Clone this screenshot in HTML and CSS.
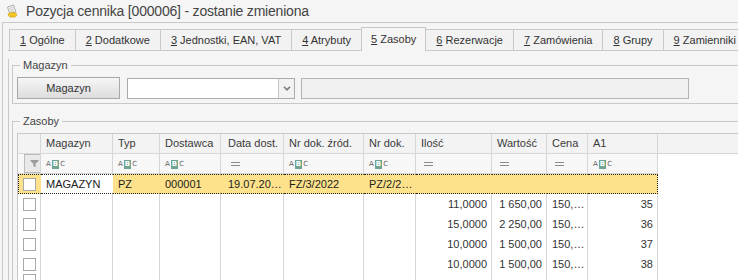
FILE: index.html
```html
<!DOCTYPE html>
<html lang="pl">
  <head>
    <meta charset="UTF-8" />
    <title>Pozycja cennika</title>
    <link rel="stylesheet" href="styles.css">
  </head>
  <body>
    <div class="title">
      <svg class="title-icon" width="14" height="14" viewBox="0 0 14 14">
        <path d="M2.5 3.2l6-2.2 2.4 7-6 2.2z" fill="#f4f4f4" stroke="#999" stroke-width="0.8" />
        <path d="M4.3 4.6l3.6-1.3M4.9 6.3l3.6-1.3M5.5 8l3.6-1.3" stroke="#aaa" stroke-width="0.6" />
        <ellipse cx="7.5" cy="10.8" rx="4.2" ry="2.4" fill="#f3c623" stroke="#c89b12" stroke-width="0.6" />
      </svg>
      Pozycja cennika [000006] - zostanie zmieniona
    </div>

    <div class="frame">
      <div class="tabs">
        <div class="tab"><u>1</u> Ogólne</div>
        <div class="tab"><u>2</u> Dodatkowe</div>
        <div class="tab"><u>3</u> Jednostki, EAN, VAT</div>
        <div class="tab"><u>4</u> Atrybuty</div>
        <div class="tab active"><u>5</u> Zasoby</div>
        <div class="tab"><u>6</u> Rezerwacje</div>
        <div class="tab"><u>7</u> Zamówienia</div>
        <div class="tab"><u>8</u> Grupy</div>
        <div class="tab"><u>9</u> Zamienniki</div>
      </div>

      <div class="panel">
        <fieldset class="group">
          <legend>Magazyn</legend>
          <div class="mag-row">
            <button class="btn" type="button">Magazyn</button>
            <div class="combo">
              <span class="combo-arrow">
                <svg width="8" height="5" viewBox="0 0 8 5">
                  <path d="M1 0.8l3 3 3-3" fill="none" stroke="#7a7a7a" stroke-width="1.6" />
                </svg>
              </span>
            </div>
            <div class="field-off"></div>
          </div>
        </fieldset>

        <fieldset class="group zasoby">
          <legend>Zasoby</legend>
          <div class="grid-wrap">
            <table class="grid">
              <colgroup>
                <col class="w-check">
                <col class="w-mag">
                <col class="w-typ">
                <col class="w-dost">
                <col class="w-date">
                <col class="w-src">
                <col class="w-doc">
                <col class="w-qty">
                <col class="w-val">
                <col class="w-price">
                <col class="w-a1">
                <col>
              </colgroup>
              <tr class="head">
                <th></th>
                <th>Magazyn</th>
                <th>Typ</th>
                <th>Dostawca</th>
                <th class="date">Data dost.</th>
                <th>Nr dok. źród.</th>
                <th>Nr dok.</th>
                <th>Ilość</th>
                <th>Wartość</th>
                <th>Cena</th>
                <th>A1</th>
                <th class="fill"></th>
              </tr>
              <tr class="filter">
                <td class="check">
                  <span class="filter-btn">
                    <svg width="9" height="9" viewBox="0 0 9 9">
                      <path d="M0.5 1h8v1L5.6 4.8V8.3L3.4 7.2V4.8L0.5 2z" fill="#9c9c9c" />
                    </svg>
                  </span>
                </td>
                <td><span class="abc">A<b>B</b>C</span></td>
                <td><span class="abc">A<b>B</b>C</span></td>
                <td><span class="abc">A<b>B</b>C</span></td>
                <td class="date"><span class="eq"></span></td>
                <td><span class="abc">A<b>B</b>C</span></td>
                <td><span class="abc">A<b>B</b>C</span></td>
                <td><span class="eq"></span></td>
                <td><span class="eq"></span></td>
                <td><span class="eq"></span></td>
                <td><span class="abc">A<b>B</b>C</span></td>
                <td class="fill"></td>
              </tr>
              <tr class="sel">
                <td class="check"><span class="cb"></span></td>
                <td class="focus">MAGAZYN</td>
                <td>PZ</td>
                <td>000001</td>
                <td class="date">19.07.2022</td>
                <td>FZ/3/2022</td>
                <td class="doc">PZ/2/2022</td>
                <td></td>
                <td></td>
                <td></td>
                <td></td>
                <td class="fill"></td>
              </tr>
              <tr>
                <td class="check"><span class="cb"></span></td>
                <td></td><td></td><td></td><td></td><td></td><td></td>
                <td class="num">11,0000</td>
                <td class="num">1 650,00</td>
                <td class="price">150,0000</td>
                <td class="num">35</td>
                <td class="fill"></td>
              </tr>
              <tr>
                <td class="check"><span class="cb"></span></td>
                <td></td><td></td><td></td><td></td><td></td><td></td>
                <td class="num">15,0000</td>
                <td class="num">2 250,00</td>
                <td class="price">150,0000</td>
                <td class="num">36</td>
                <td class="fill"></td>
              </tr>
              <tr>
                <td class="check"><span class="cb"></span></td>
                <td></td><td></td><td></td><td></td><td></td><td></td>
                <td class="num">10,0000</td>
                <td class="num">1 500,00</td>
                <td class="price">150,0000</td>
                <td class="num">37</td>
                <td class="fill"></td>
              </tr>
              <tr>
                <td class="check"><span class="cb"></span></td>
                <td></td><td></td><td></td><td></td><td></td><td></td>
                <td class="num">10,0000</td>
                <td class="num">1 500,00</td>
                <td class="price">150,0000</td>
                <td class="num">38</td>
                <td class="fill"></td>
              </tr>
              <tr>
                <td class="check"><span class="cb"></span></td>
                <td></td><td></td><td></td><td></td><td></td><td></td>
                <td></td><td></td><td></td><td></td>
                <td class="fill"></td>
              </tr>
            </table>
          </div>
        </fieldset>
      </div>
    </div>
  </body>
</html>
```

FILE: styles.css
```css
html,
body {
  overflow: hidden;
}

body {
  margin: 0;
  width: 738px;
  height: 280px;
  background: #f5f5f5;
  font-family: "Liberation Sans", Arial, sans-serif;
  font-size: 11px;
  color: #333;
}

.title {
  height: 22px;
  display: flex;
  align-items: center;
  padding-left: 5px;
  font-size: 14px;
  letter-spacing: -0.2px;
  color: #444;
}

.title-icon {
  margin-right: 7px;
}

.frame {
  margin-left: 2px;
  width: 800px;
  height: 300px;
  border-top: 1px solid #c8c8c8;
  border-left: 1px solid #c8c8c8;
}

/* tabs */
.tabs {
  display: flex;
  align-items: flex-end;
  height: 27px;
  margin-left: 5px;
  padding-left: 1px;
  border-bottom: 1px solid #c8c8c8;
}

.tab {
  line-height: 20px;
  padding: 0 10px;
  margin-left: -1px;
  border: 1px solid #c8c8c8;
  border-bottom: none;
  background: #f2f2f2;
  white-space: nowrap;
}

.tab:first-child {
  margin-left: 0;
}

.tab.active {
  padding: 1px 9px 2px;
  margin-bottom: -1px;
  background: #f5f5f5;
}

.panel {
  margin-left: 5px;
  padding-left: 3px;
  height: 260px;
  border-left: 1px solid #c8c8c8;
}

/* group boxes */
.group {
  margin: 8px 0 0;
  min-width: 0;
  padding: 5px 0 4px 4px;
  border: 1px solid #c8c8c8;
}

.group.zasoby {
  margin-top: 11px;
  padding-bottom: 0;
}

.group legend {
  margin-left: 3px;
  padding: 0 3px;
  line-height: 13px;
  color: #444;
}

.mag-row {
  display: flex;
  align-items: flex-end;
}

.btn {
  width: 103px;
  height: 22px;
  margin: 0 7px 0 0;
  padding: 0;
  border: 1px solid #a8a8a8;
  background: linear-gradient(#f6f6f6, #dddddd);
  font: inherit;
  color: #333;
}

.combo {
  display: flex;
  justify-content: flex-end;
  width: 168px;
  height: 21px;
  margin-right: 6px;
  box-sizing: border-box;
  border: 1px solid #ababab;
  background: #fff;
}

.combo-arrow {
  display: flex;
  align-items: center;
  justify-content: center;
  width: 15px;
  border-left: 1px solid #c8c8c8;
  background: #f2f2f2;
}

.field-off {
  width: 388px;
  height: 21px;
  box-sizing: border-box;
  border: 1px solid #b4b4b4;
  background: #f0f0f0;
}

/* grid */
.grid-wrap {
  height: 160px;
  border-top: 1px solid #c8c8c8;
  border-left: 1px solid #c8c8c8;
  background: #fff;
}

.grid {
  width: 100%;
  table-layout: fixed;
  border-spacing: 0;
}

.w-check { width: 23px; }
.w-mag { width: 72px; }
.w-typ { width: 47px; }
.w-dost { width: 61px; }
.w-date { width: 63px; }
.w-src { width: 80px; }
.w-doc { width: 52px; }
.w-qty { width: 76px; }
.w-val { width: 55px; }
.w-price { width: 41px; }
.w-a1 { width: 70px; }

.grid th,
.grid td {
  padding: 0 4px 0 5px;
  line-height: 20px;
  border-right: 1px solid #d6d6d6;
  white-space: nowrap;
  overflow: hidden;
  text-overflow: ellipsis;
  text-align: left;
  font-weight: normal;
}

.grid .fill {
  border-right: none;
}

.grid .date {
  padding-left: 7px;
  padding-right: 0;
}

.head th {
  line-height: 19px;
  border-bottom: 1px solid #d6d6d6;
  background: #f3f3f3;
  color: #3a3a3a;
}

.filter td {
  line-height: 19px;
  border-bottom: 1px solid #d6d6d6;
  background: #f7f7f7;
}

.filter .fill {
  background: #fff;
  border-bottom: none;
}

.filter .check {
  padding: 0;
}

.filter-btn {
  display: flex;
  align-items: center;
  justify-content: center;
  width: 19px;
  height: 17px;
  margin-left: 1px;
  border: 1px solid #bcbcbc;
  background: #e9e9e9;
}

.abc {
  display: inline-flex;
  align-items: center;
  font-family: "DejaVu Sans", sans-serif;
  font-size: 7px;
  line-height: 9px;
  color: #666;
  vertical-align: middle;
}

.abc b {
  margin: 0 1px;
  padding: 0 1px;
  background: #6fa591;
  color: #fff;
}

.eq {
  display: inline-block;
  width: 9px;
  height: 2px;
  margin-left: 3px;
  border-top: 1px solid #8a8a8a;
  border-bottom: 1px solid #8a8a8a;
  vertical-align: middle;
}

.grid .check {
  padding: 0 0 0 5px;
}

.cb {
  display: block;
  width: 11px;
  height: 11px;
  border: 1px solid #a9a9a9;
  background: #fff;
}

.sel td {
  line-height: 18px;
  border-top: 1px dotted #222;
  border-bottom: 1px dotted #222;
  border-right: 1px solid transparent;
  background: #fde28b;
  color: #222;
}

.sel .check {
  padding-left: 4px;
  border-left: 1px dotted #222;
}

.sel td:nth-child(11) {
  border-right: 1px dotted #222;
}

.sel .focus {
  background: #fff;
}

.sel .fill {
  border: none;
  background: #fff;
}

.grid .doc {
  padding-right: 1px;
}

.grid .num {
  text-align: right;
}

.grid .price {
  padding-right: 2px;
}
```
